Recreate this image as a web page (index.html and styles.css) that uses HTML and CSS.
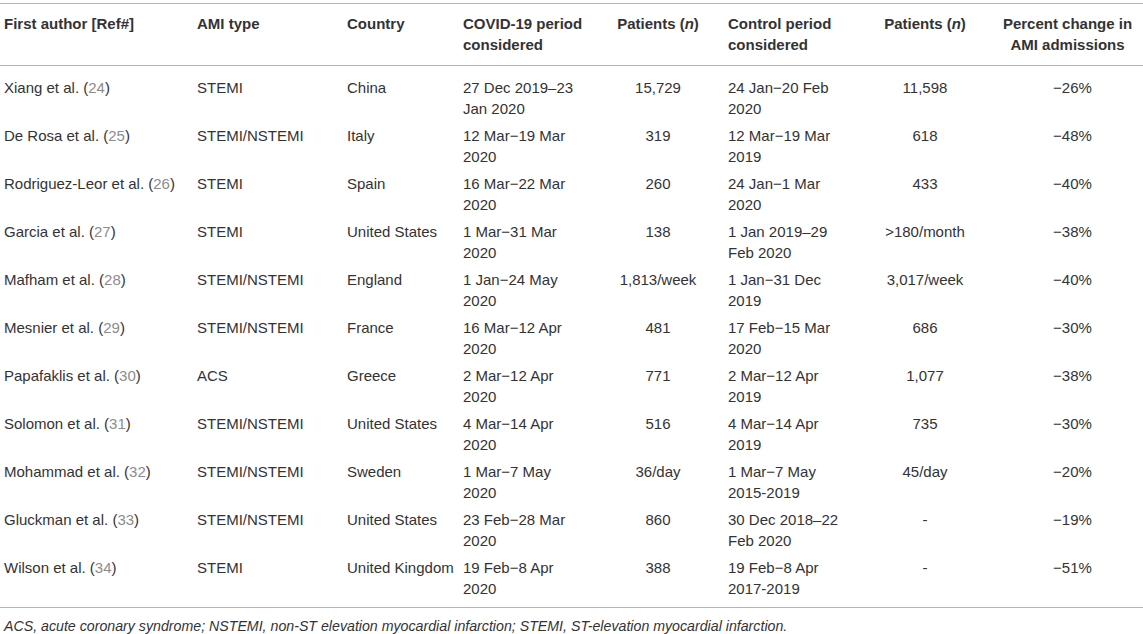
FILE: index.html
```html
<!DOCTYPE html>
<html lang="en">
<head>
    <meta charset="UTF-8">
    <meta name="viewport" content="width=device-width, initial-scale=1.0">
    <title>AMI admissions during COVID-19</title>
    <link rel="stylesheet" href="styles.css">
</head>
<body>
    <table class="study-table">
        <colgroup>
            <col class="c-author">
            <col class="c-type">
            <col class="c-country">
            <col class="c-covid">
            <col class="c-pat">
            <col class="c-control">
            <col class="c-pat2">
            <col class="c-change">
        </colgroup>
        <thead>
            <tr>
                <th class="first">First author [Ref#]</th>
                <th>AMI type</th>
                <th>Country</th>
                <th>COVID-19 period<br>considered</th>
                <th class="num">Patients (<i>n</i>)</th>
                <th>Control period<br>considered</th>
                <th class="num2">Patients (<i>n</i>)</th>
                <th class="pct">Percent change in<br>AMI admissions</th>
            </tr>
        </thead>
        <tbody>
            <tr>
                <td class="first">Xiang et al. (<span class="ref">24</span>)</td>
                <td>STEMI</td>
                <td>China</td>
                <td>27 Dec 2019–23 Jan 2020</td>
                <td class="num">15,729</td>
                <td>24 Jan−20 Feb 2020</td>
                <td class="num2">11,598</td>
                <td class="pct">−26%</td>
            </tr>
            <tr>
                <td class="first">De Rosa et al. (<span class="ref">25</span>)</td>
                <td>STEMI/NSTEMI</td>
                <td>Italy</td>
                <td>12 Mar−19 Mar 2020</td>
                <td class="num">319</td>
                <td>12 Mar−19 Mar 2019</td>
                <td class="num2">618</td>
                <td class="pct">−48%</td>
            </tr>
            <tr>
                <td class="first">Rodriguez-Leor et al. (<span class="ref">26</span>)</td>
                <td>STEMI</td>
                <td>Spain</td>
                <td>16 Mar−22 Mar 2020</td>
                <td class="num">260</td>
                <td>24 Jan−1 Mar 2020</td>
                <td class="num2">433</td>
                <td class="pct">−40%</td>
            </tr>
            <tr>
                <td class="first">Garcia et al. (<span class="ref">27</span>)</td>
                <td>STEMI</td>
                <td>United States</td>
                <td>1 Mar−31 Mar 2020</td>
                <td class="num">138</td>
                <td>1 Jan 2019–29 Feb 2020</td>
                <td class="num2">&gt;180/month</td>
                <td class="pct">−38%</td>
            </tr>
            <tr>
                <td class="first">Mafham et al. (<span class="ref">28</span>)</td>
                <td>STEMI/NSTEMI</td>
                <td>England</td>
                <td>1 Jan−24 May 2020</td>
                <td class="num">1,813/week</td>
                <td>1 Jan−31 Dec 2019</td>
                <td class="num2">3,017/week</td>
                <td class="pct">−40%</td>
            </tr>
            <tr>
                <td class="first">Mesnier et al. (<span class="ref">29</span>)</td>
                <td>STEMI/NSTEMI</td>
                <td>France</td>
                <td>16 Mar−12 Apr 2020</td>
                <td class="num">481</td>
                <td>17 Feb−15 Mar 2020</td>
                <td class="num2">686</td>
                <td class="pct">−30%</td>
            </tr>
            <tr>
                <td class="first">Papafaklis et al. (<span class="ref">30</span>)</td>
                <td>ACS</td>
                <td>Greece</td>
                <td>2 Mar−12 Apr 2020</td>
                <td class="num">771</td>
                <td>2 Mar−12 Apr 2019</td>
                <td class="num2">1,077</td>
                <td class="pct">−38%</td>
            </tr>
            <tr>
                <td class="first">Solomon et al. (<span class="ref">31</span>)</td>
                <td>STEMI/NSTEMI</td>
                <td>United States</td>
                <td>4 Mar−14 Apr 2020</td>
                <td class="num">516</td>
                <td>4 Mar−14 Apr 2019</td>
                <td class="num2">735</td>
                <td class="pct">−30%</td>
            </tr>
            <tr>
                <td class="first">Mohammad et al. (<span class="ref">32</span>)</td>
                <td>STEMI/NSTEMI</td>
                <td>Sweden</td>
                <td>1 Mar−7 May 2020</td>
                <td class="num">36/day</td>
                <td>1 Mar−7 May 2015-2019</td>
                <td class="num2">45/day</td>
                <td class="pct">−20%</td>
            </tr>
            <tr>
                <td class="first">Gluckman et al. (<span class="ref">33</span>)</td>
                <td>STEMI/NSTEMI</td>
                <td>United States</td>
                <td>23 Feb−28 Mar 2020</td>
                <td class="num">860</td>
                <td>30 Dec 2018–22 Feb 2020</td>
                <td class="num2">-</td>
                <td class="pct">−19%</td>
            </tr>
            <tr>
                <td class="first">Wilson et al. (<span class="ref">34</span>)</td>
                <td>STEMI</td>
                <td>United Kingdom</td>
                <td>19 Feb−8 Apr 2020</td>
                <td class="num">388</td>
                <td>19 Feb−8 Apr 2017-2019</td>
                <td class="num2">-</td>
                <td class="pct">−51%</td>
            </tr>
        </tbody>
    </table>
    <p class="footnote">ACS, acute coronary syndrome; NSTEMI, non-ST elevation myocardial infarction; STEMI, ST-elevation myocardial infarction.</p>
</body>
</html>
```

FILE: styles.css
```css
body {
    margin: 0;
    background: #fff;
    color: #333;
    font-family: "Liberation Sans", Arial, Helvetica, sans-serif;
    font-size: 15px;
    line-height: 21px;
}

.study-table {
    width: 1143px;
    margin-top: 3px;
    border-collapse: collapse;
    table-layout: fixed;
    border-top: 1px solid #b5b5b5;
    border-bottom: 1px solid #b5b5b5;
}

.c-author { width: 197px; }
.c-type { width: 150px; }
.c-country { width: 116px; }
.c-covid { width: 120px; }
.c-pat { width: 145px; }
.c-control { width: 120px; }
.c-pat2 { width: 154px; }
.c-change { width: 141px; }

th, td {
    text-align: left;
    vertical-align: top;
    padding: 3px 2px 3px 0;
}

th {
    font-weight: bold;
    color: #333;
    white-space: nowrap;
    padding-top: 9px;
    padding-bottom: 10px;
    border-bottom: 1px solid #b5b5b5;
}

.first {
    padding-left: 4px;
}

.num {
    text-align: center;
    padding-left: 5px;
    padding-right: 0;
}

.num2, .pct {
    text-align: center;
    padding-right: 0;
}

th.pct {
    padding-right: 10px;
}

tbody tr:first-child td {
    padding-top: 11px;
}

tbody tr:last-child td {
    padding-bottom: 8px;
}

.ref {
    color: #8c8c8c;
}

.footnote {
    margin: 8px 0 0;
    padding-left: 4px;
    font-size: 14.2px;
    font-style: italic;
    color: #333;
}
```
